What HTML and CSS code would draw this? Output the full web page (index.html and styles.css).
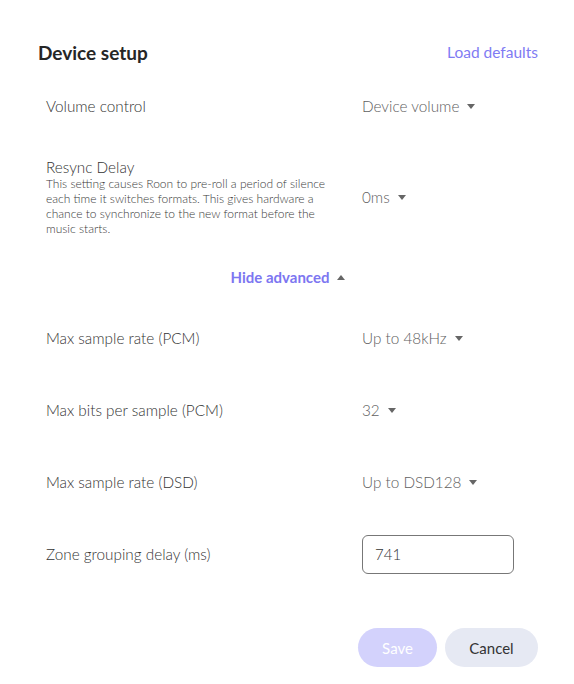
FILE: index.html
```html
<!DOCTYPE html>
<html>
<head>
  <link rel="stylesheet" href="styles.css">
</head>
<body>
  <div class="setup">
    <div class="setup-header">
      <h1 class="setup-title">Device setup</h1>
      <a class="link-button">Load defaults</a>
    </div>

    <div class="setting-row">
      <div class="setting-label">Volume control</div>
      <div class="dropdown">Device volume <span class="caret"></span></div>
    </div>

    <div class="setting-row tall">
      <div class="setting-label">
        <div>Resync Delay</div>
        <div class="setting-desc">This setting causes Roon to pre-roll a period of silence each time it switches formats. This gives hardware a chance to synchronize to the new format before the music starts.</div>
      </div>
      <div class="dropdown">0ms <span class="caret"></span></div>
    </div>

    <div class="advanced-toggle">
      <span>Hide advanced</span> <span class="caret up"></span>
    </div>

    <div class="setting-row">
      <div class="setting-label">Max sample rate (PCM)</div>
      <div class="dropdown">Up to 48kHz <span class="caret"></span></div>
    </div>

    <div class="setting-row">
      <div class="setting-label">Max bits per sample (PCM)</div>
      <div class="dropdown">32 <span class="caret"></span></div>
    </div>

    <div class="setting-row">
      <div class="setting-label">Max sample rate (DSD)</div>
      <div class="dropdown">Up to DSD128 <span class="caret"></span></div>
    </div>

    <div class="setting-row">
      <div class="setting-label">Zone grouping delay (ms)</div>
      <div><input class="text-input" type="text" value="741"></div>
    </div>

    <div class="actions">
      <button class="btn btn-save">Save</button>
      <button class="btn btn-cancel">Cancel</button>
    </div>
  </div>
</body>
</html>
```

FILE: styles.css
```css
body {
  margin: 0;
  font-family: 'Lato', 'Open Sans', sans-serif;
  background-color: #ffffff;
  color: #333333;
}

.setup {
  padding: 38px 36px 0 38px;
}

.setup-header {
  display: flex;
  justify-content: space-between;
  align-items: center;
  height: 28px;
  margin-bottom: 4px;
}

.setup-title {
  margin: 0;
  font-size: 19px;
  font-weight: 700;
  color: #262626;
}

.link-button {
  font-size: 15.5px;
  color: #7f7bf3;
  cursor: pointer;
}

.setting-row {
  display: grid;
  grid-template-columns: 316px 1fr;
  align-items: center;
  height: 72px;
  padding-left: 8px;
}

.setting-row.tall {
  height: 110px;
}

.setting-label {
  font-size: 15.3px;
  font-weight: 300;
  color: #333333;
}

.setting-desc {
  font-size: 12px;
  line-height: 15px;
  color: #3a3a3a;
  max-width: 296px;
}

.dropdown {
  font-size: 15.3px;
  font-weight: 300;
  color: #606060;
  display: flex;
  align-items: center;
  cursor: pointer;
}

.caret {
  display: inline-block;
  width: 0;
  height: 0;
  border-left: 4px solid transparent;
  border-right: 4px solid transparent;
  border-top: 5px solid #666666;
  margin-left: 8px;
}

.caret.up {
  border-top: none;
  border-bottom: 5px solid #666666;
}

.advanced-toggle {
  display: flex;
  justify-content: center;
  align-items: center;
  height: 50px;
  font-size: 15px;
  font-weight: 700;
  color: #7c76f1;
  cursor: pointer;
}

.text-input {
  box-sizing: border-box;
  width: 152px;
  height: 39px;
  padding: 0 12px;
  border: 1px solid #777777;
  border-radius: 6px;
  font-family: inherit;
  font-size: 15px;
  font-weight: 300;
  color: #333333;
  outline: none;
}

.actions {
  display: flex;
  justify-content: flex-end;
  gap: 8px;
  margin-top: 38px;
}

.btn {
  height: 39px;
  border: none;
  border-radius: 20px;
  font-family: inherit;
  font-size: 15px;
  cursor: pointer;
}

.btn-save {
  width: 79px;
  background-color: #d3d2fc;
  color: #ffffff;
}

.btn-cancel {
  width: 93px;
  background-color: #e6e9f3;
  color: #333333;
}
```
